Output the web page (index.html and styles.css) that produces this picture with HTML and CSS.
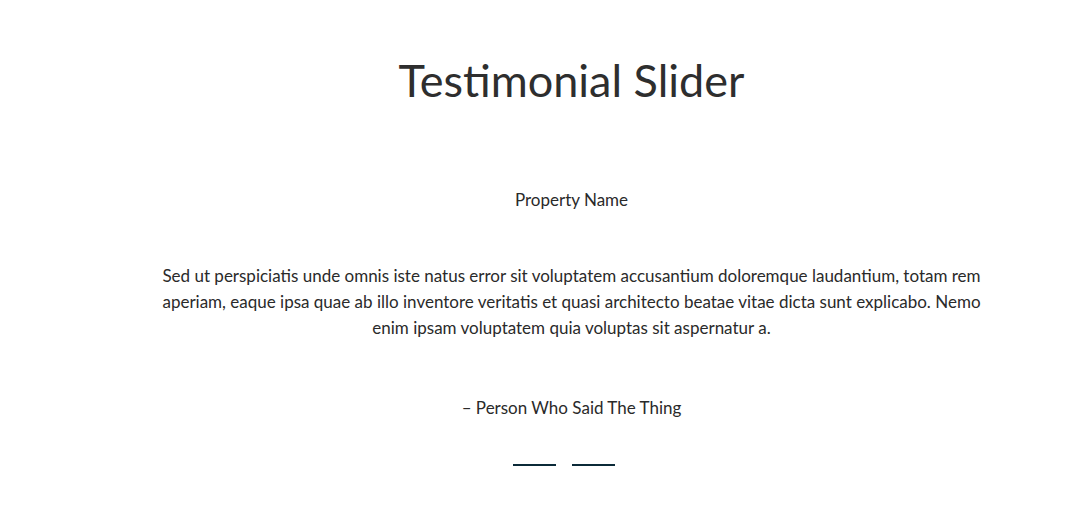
FILE: index.html
```html
<!DOCTYPE html>
<html lang="en">
<head>
<meta charset="utf-8">
<title>Testimonial Slider</title>
<link rel="stylesheet" href="styles.css">
</head>
<body>
<section class="testimonials">
  <h2 class="title">Testimonial Slider</h2>
  <div class="slide">
    <p class="property">Property Name</p>
    <p class="quote">Sed ut perspiciatis unde omnis iste natus error sit voluptatem accusantium doloremque laudantium, totam rem aperiam, eaque ipsa quae ab illo inventore veritatis et quasi architecto beatae vitae dicta sunt explicabo. Nemo enim ipsam voluptatem quia voluptas sit aspernatur a.</p>
    <p class="author">– Person Who Said The Thing</p>
  </div>
  <div class="dots">
    <span class="dot"></span>
    <span class="dot"></span>
  </div>
</section>
</body>
</html>
```
FILE: styles.css
```css
html, body {
  margin: 0;
  background: #fff;
}
body {
  font-family: Lato, "Noto Sans", sans-serif;
  color: #2a2a2a;
}
.testimonials {
  padding: 55px 0 0 52px;
  display: flex;
  flex-direction: column;
  align-items: center;
}
.title {
  margin: 0;
  font-size: 45px;
  line-height: 50px;
  font-weight: 400;
  color: #2e2e2e;
}
.slide {
  display: flex;
  flex-direction: column;
  align-items: center;
  text-align: center;
}
.property {
  margin: 83px 0 0;
  font-size: 17px;
  line-height: 24px;
}
.quote {
  margin: 51px 0 0;
  max-width: 840px;
  font-size: 17px;
  line-height: 26px;
}
.author {
  margin: 55px 0 0;
  font-size: 17px;
  line-height: 24px;
}
.dots {
  display: flex;
  gap: 16px;
  margin-top: 44px;
  padding-right: 15px;
}
.dot {
  width: 43px;
  height: 2px;
  background: #0b2a38;
}
```
